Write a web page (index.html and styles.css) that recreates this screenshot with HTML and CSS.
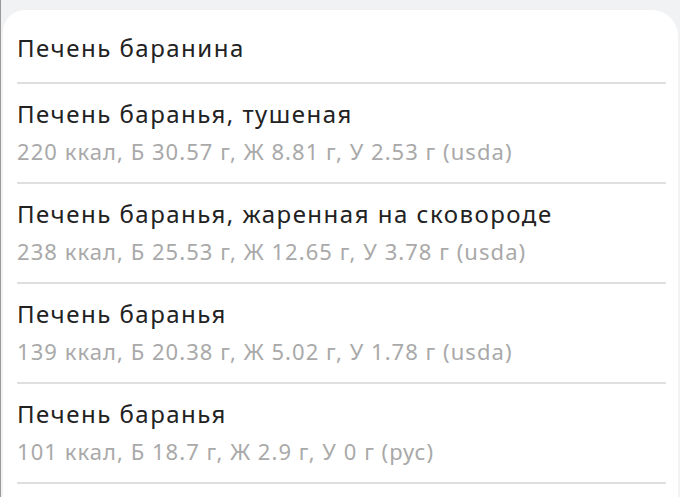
FILE: index.html
```html
<!DOCTYPE html>
<html lang="ru">
<head>
<meta charset="utf-8">
<link rel="stylesheet" href="styles.css">
</head>
<body>
<div class="screen">
  <div class="card">
    <div class="item single">
      <div class="title">Печень баранина</div>
    </div>
    <div class="item">
      <div class="title">Печень баранья, тушеная</div>
      <div class="sub">220 ккал, Б 30.57 г, Ж 8.81 г, У 2.53 г (usda)</div>
    </div>
    <div class="item">
      <div class="title">Печень баранья, жаренная на сковороде</div>
      <div class="sub">238 ккал, Б 25.53 г, Ж 12.65 г, У 3.78 г (usda)</div>
    </div>
    <div class="item">
      <div class="title">Печень баранья</div>
      <div class="sub">139 ккал, Б 20.38 г, Ж 5.02 г, У 1.78 г (usda)</div>
    </div>
    <div class="item">
      <div class="title">Печень баранья</div>
      <div class="sub">101 ккал, Б 18.7 г, Ж 2.9 г, У 0 г (рус)</div>
    </div>
  </div>
</div>
</body>
</html>
```
FILE: styles.css
```css
html, body {
  margin: 0;
  padding: 0;
  height: 100%;
  overflow: hidden;
}
body {
  background: #f1f2f4;
  font-family: "Noto Sans", "Open Sans", sans-serif;
}
.screen {
  height: 100%;
  border-left: 1px solid #9a9a9a;
  padding: 10px 2px 0 2px;
  box-sizing: border-box;
}
.card {
  background: #ffffff;
  border-radius: 22px 26px 0 0;
  height: 100%;
  padding-left: 14px;
  padding-right: 12px;
}
.item {
  border-bottom: 2px solid #dedfe0;
  padding: 15px 0 17px 0;
}
.item.single {
  padding: 23px 0 19px 0;
}
.title {
  font-size: 24px;
  line-height: 30px;
  letter-spacing: 1.5px;
  color: #222222;
}
.sub {
  font-size: 22px;
  line-height: 28px;
  letter-spacing: 1.05px;
  margin-top: 8px;
  color: #a9a9a9;
}
```
